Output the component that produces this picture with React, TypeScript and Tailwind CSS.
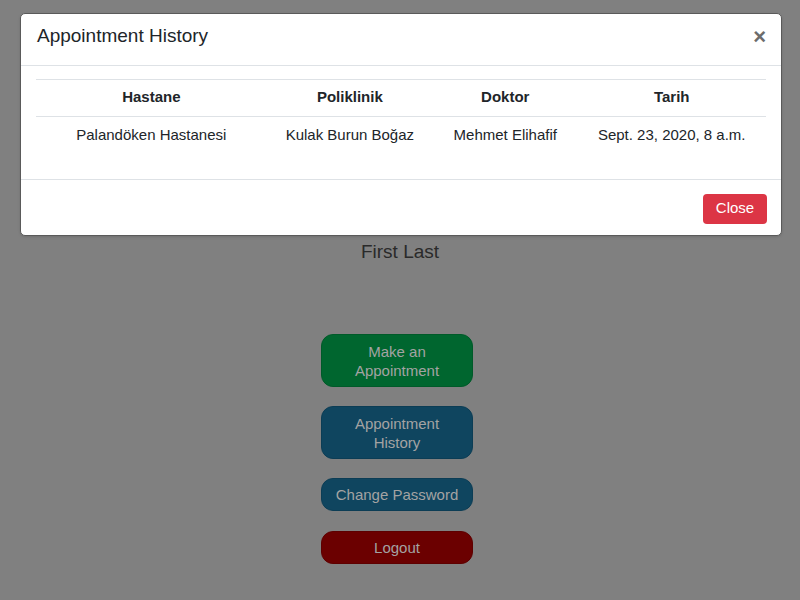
import React from 'react';

const rows = [
  { hastane: 'Palandöken Hastanesi', poliklinik: 'Kulak Burun Boğaz', doktor: 'Mehmet Elihafif', tarih: 'Sept. 23, 2020, 8 a.m.' },
];

const App: React.FC = () => {
  return (
    <div className="relative w-[800px] h-[600px] overflow-hidden bg-[#808080] font-['Liberation_Sans',Arial,sans-serif]">
      {/* Page under the backdrop */}
      <div className="flex flex-col items-center pt-[241px]">
        <h5 className="text-[19px] leading-[22px] text-[#2a2a2a]">First Last</h5>
        <div className="mt-[71px] mr-[6px] flex flex-col gap-[19px] w-[152px] text-[15px] leading-[19px] text-[#a3a3a3] text-center">
          <button className="h-[53px] rounded-[12px] bg-[#00662f] border border-[#005a29] px-4">Make an Appointment</button>
          <button className="h-[53px] rounded-[12px] bg-[#0f455f] border border-[#0c3d55] px-4">Appointment History</button>
          <button className="h-[33px] rounded-[12px] bg-[#0f455f] border border-[#0c3d55]">Change Password</button>
          <button className="h-[33px] rounded-[12px] bg-[#6b0000] border border-[#5e0000] mt-px">Logout</button>
        </div>
      </div>

      {/* Modal */}
      <div className="absolute left-[20px] top-[13px] w-[762px] bg-white rounded-[5px] border border-[#5a5a5a] shadow-sm text-[#212529]">
        <div className="flex items-start justify-between h-[52px] pl-[16px] pr-[15px] border-b border-[#dee2e6]">
          <h5 className="pt-[11px] text-[19px] leading-[22px]">Appointment History</h5>
          <span className="mt-[12px] text-[22px] font-bold text-[#6c6c6c] leading-none">×</span>
        </div>
        <div className="px-[15px] pt-[13px] pb-[25px]">
          <table className="w-full table-fixed border-collapse text-[15px] text-center">
            <colgroup>
              <col className="w-[230px]" />
              <col className="w-[166px]" />
              <col className="w-[144px]" />
              <col className="w-[188px]" />
            </colgroup>
            <thead>
              <tr className="border-t border-b border-[#dee2e6] h-[37px]">
                <th className="font-bold pb-px">Hastane</th>
                <th className="font-bold pb-px">Poliklinik</th>
                <th className="font-bold pb-px">Doktor</th>
                <th className="font-bold pb-px">Tarih</th>
              </tr>
            </thead>
            <tbody>
              {rows.map((r) => (
                <tr key={r.tarih} className="h-[37px]">
                  <td>{r.hastane}</td>
                  <td>{r.poliklinik}</td>
                  <td>{r.doktor}</td>
                  <td>{r.tarih}</td>
                </tr>
              ))}
            </tbody>
          </table>
        </div>
        <div className="flex justify-end border-t border-[#dee2e6] px-[14px] pt-[14px] pb-[11px]">
          <button className="h-[30px] w-[64px] rounded-[4px] bg-[#dc3545] text-white text-[15px]">Close</button>
        </div>
      </div>
    </div>
  );
};

export default App;
